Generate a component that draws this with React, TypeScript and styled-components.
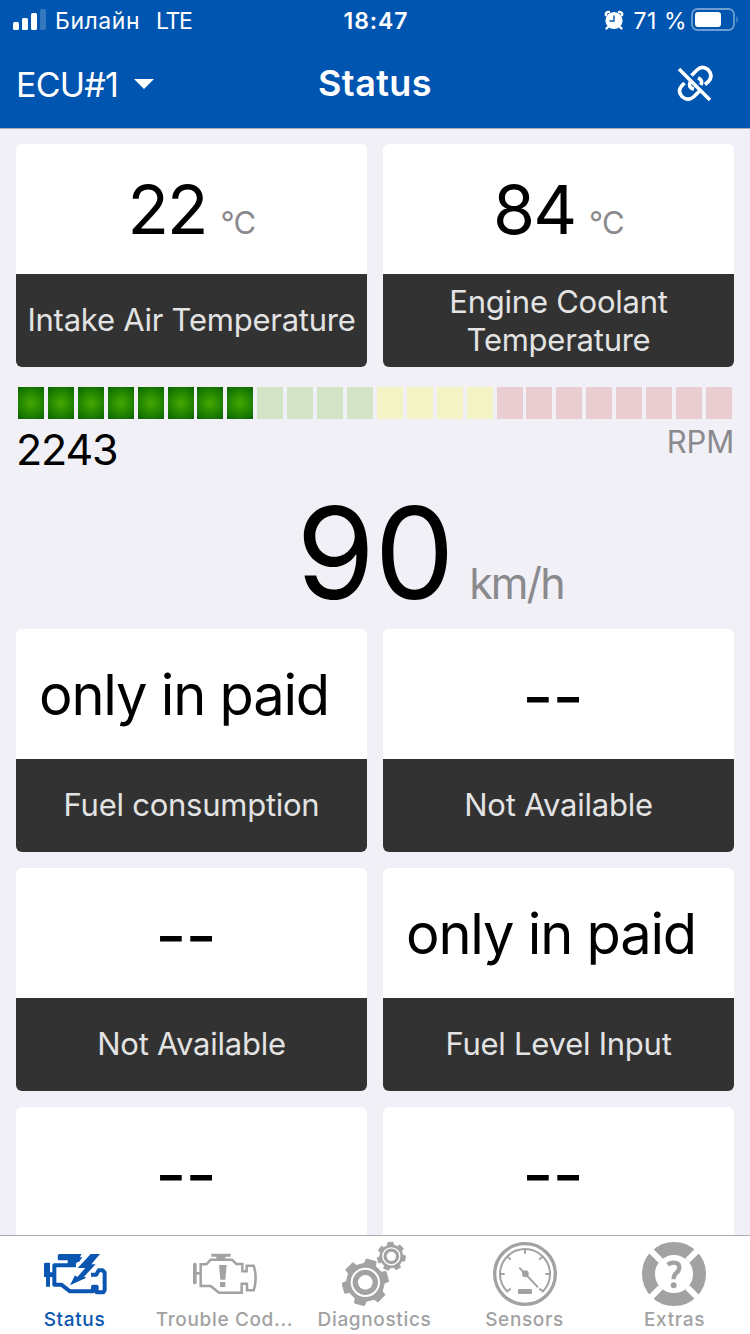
import React from 'react';
import styled, { createGlobalStyle } from 'styled-components';

const GlobalStyle = createGlobalStyle`
  * { box-sizing: border-box; }
  body { margin: 0; background: #f1f0f6; font-family: Inter, "Liberation Sans", sans-serif; }
  svg { display: block; flex: none; }
`;

const Screen = styled.div`
  width: 750px;
  height: 1334px;
  display: flex;
  flex-direction: column;
  overflow: hidden;
  background: #f1f0f6;
`;

const Header = styled.header`
  height: 129px;
  flex: none;
  background: #0055b0;
  border-bottom: 1px solid #a9adb6;
  color: #fff;
`;

const StatusBar = styled.div`
  height: 40px;
  display: grid;
  grid-template-columns: 1fr auto 1fr;
  align-items: center;
  padding: 1px 11px 0 13px;
  font-size: 23px;
  line-height: 40px;
`;

const Carrier = styled.div`
  display: flex;
  align-items: center;
  letter-spacing: 0.55px;
  white-space: pre;
`;

const Network = styled.span`
  margin-left: 16px;
  letter-spacing: -1.4px;
`;

const SignalIcon = styled.svg`
  margin: 0 9px 2px 0;
`;

const Clock = styled.div`
  font-weight: 600;
  letter-spacing: 0.9px;
`;

const Power = styled.div`
  display: flex;
  align-items: center;
  justify-content: flex-end;

  > svg { margin-bottom: 2px; }
`;

const Percent = styled.span`
  margin: 0 4px 0 10px;
  white-space: nowrap;
  letter-spacing: 0.5px;
`;

const NavBar = styled.div`
  height: 88px;
  display: grid;
  grid-template-columns: 1fr auto 1fr;
  align-items: center;
  padding: 0 16px;
`;

const EcuPicker = styled.div`
  display: flex;
  align-items: center;
  gap: 16px;
  font-size: 34px;
  letter-spacing: -0.8px;
`;

const Title = styled.h1`
  margin: 0;
  padding-bottom: 2px;
  font-size: 36px;
  font-weight: 600;
  line-height: 84px;
  letter-spacing: 0.4px;
`;

const LinkIcon = styled.svg`
  justify-self: end;
  margin-right: 20px;
`;

const Content = styled.main`
  flex: 1;
  min-height: 0;
  overflow: hidden;
  padding: 15px 16px 0;
`;

const CardGrid = styled.section`
  display: grid;
  grid-template-columns: 351px 351px;
  gap: 16px;
`;

const Card = styled.article`
  height: 223px;
  border-radius: 6px;
  overflow: hidden;
  display: flex;
  flex-direction: column;
  background: #fff;
`;

type ReadingKind = 'number' | 'text' | 'empty';

const readingStyles: Record<ReadingKind, string> = {
  number: 'font-size: 68px; line-height: 130px; letter-spacing: -2px;',
  text: 'font-size: 56px; line-height: 132px; letter-spacing: -1.2px; padding-right: 15px;',
  empty: 'font-size: 68px; line-height: 135px; letter-spacing: -1px; padding-right: 12px;',
};

const Reading = styled.div<{ $kind: ReadingKind }>`
  height: 130px;
  display: flex;
  align-items: baseline;
  justify-content: center;
  white-space: nowrap;
  color: #000;
  ${(p) => readingStyles[p.$kind]}
`;

const Unit = styled.span`
  margin-left: 14px;
  font-size: 31px;
  line-height: 40px;
  letter-spacing: -0.8px;
  color: #8a8a8e;
`;

const Caption = styled.div<{ $tall?: boolean }>`
  flex: 1;
  display: flex;
  align-items: center;
  justify-content: center;
  padding-bottom: ${(p) => (p.$tall ? 0 : '1px')};
  text-align: center;
  background: #323232;
  color: #e3e3e3;
  font-size: 31px;
  line-height: 38px;
  letter-spacing: -0.25px;
`;

const Tachometer = styled.section`
  height: 112px;
  padding-top: 20px;
`;

const Segments = styled.div`
  display: flex;
  gap: 3.91px;
  width: 714px;
  height: 32px;
  margin-left: 2px;
`;

const tones = {
  lit: 'radial-gradient(circle at 50% 50%, #45a800 0%, #218500 55%, #0a6200 100%)',
  green: '#d2e3c6',
  yellow: '#f4f3c5',
  red: '#e9cdd1',
};

const Segment = styled.i<{ $tone: keyof typeof tones }>`
  flex: 1;
  background: ${(p) => tones[p.$tone]};
`;

const TachLabels = styled.div`
  display: flex;
  justify-content: space-between;
  align-items: flex-start;
`;

const Rpm = styled.span`
  font-size: 43px;
  line-height: 60px;
  letter-spacing: -1.2px;
`;

const RpmUnit = styled.span`
  font-size: 31px;
  line-height: 46px;
  color: #8a8a8e;
  letter-spacing: -0.2px;
`;

const Speed = styled.section`
  height: 150px;
  display: flex;
  justify-content: center;
  align-items: baseline;
  line-height: 149px;
  font-size: 127px;
  letter-spacing: -0.5px;
  padding-left: 110px;
`;

const SpeedUnit = styled.span`
  margin-left: 15px;
  font-size: 43px;
  letter-spacing: -1.9px;
  color: #8a8a8e;
`;

const TabBar = styled.nav`
  height: 99px;
  flex: none;
  display: grid;
  grid-template-columns: repeat(5, 1fr);
  background: #fff;
  border-top: 1px solid #acacac;
`;

const Tab = styled.div<{ $active?: boolean }>`
  display: flex;
  flex-direction: column;
  align-items: center;
  padding-top: 5px;
  color: ${(p) => (p.$active ? '#0a56b0' : '#a2a2a2')};
`;

const TabLabel = styled.span`
  padding: 1px 1px 0 0;
  font-size: 19px;
  font-weight: 500;
  line-height: 24px;
  letter-spacing: 0.65px;
  white-space: nowrap;
`;

const gearPath = (cx: number, cy: number, outer: number, inner: number, teeth: number, turn: number) => {
  const step = 360 / teeth;
  const pts: string[] = [];
  for (let i = 0; i < teeth; i++) {
    const a = turn + i * step;
    [[-0.29, inner], [-0.21, outer], [0.21, outer], [0.29, inner]].forEach(([f, r]) => {
      const t = ((a + f * step) * Math.PI) / 180;
      pts.push(`${(cx + r * Math.cos(t)).toFixed(1)} ${(cy + r * Math.sin(t)).toFixed(1)}`);
    });
  }
  return `M${pts.join('L')}Z`;
};

const StatusIcon = () => (
  <svg width="66" height="66" viewBox="66 33 198 198" fill="currentColor">
    <path d="M117 72H184L180 82H187L177 96H172L165 104H143V91H117Q113 91 113 82T117 72Z" />
    <path d="M72 100L78 98H90V127H100V141H90V170H78V141H72Z" />
    <path d="M168 106H103V164H124L150 184H219V170H230V187H250L254 180V127L248 121H236L229 134H213" fill="none" stroke="currentColor" strokeWidth="12" strokeLinejoin="round" />
    <path d="M212 72H240L214 103H227L192 140L199 143L150 166L165 136L172 141L196 114H173Z" />
  </svg>
);

const TroubleIcon = () => (
  <svg width="66" height="66" viewBox="126 33 198 198" fill="currentColor">
    <path d="M184 71H242V80H226V90H199V80H184Z" />
    <rect x="129" y="98" width="11" height="65" rx="5" />
    <path d="M138 130H152M152 168V103H169L182 89H246L259 102H277V124H290V107H311Q323 145 311 181H291V161H275V188H207L182 168Z" fill="none" stroke="currentColor" strokeWidth="7.500" />
    <path d="M207 105H230L226 149H211ZM210 156H226V171H210Z" />
  </svg>
);

const DiagnosticsIcon = () => (
  <svg width="66" height="66" viewBox="96 33 198 198">
    <path d={gearPath(166, 157, 70, 57, 6, -75)} fill="currentColor" stroke="currentColor" strokeWidth="3" strokeLinejoin="round" />
    <circle cx="166" cy="157" r="41" fill="none" stroke="#fff" strokeWidth="6" />
    <circle cx="166" cy="157" r="22" fill="#fff" />
    <path d={gearPath(244, 79, 43, 35, 7, -94)} fill="currentColor" stroke="currentColor" strokeWidth="2" strokeLinejoin="round" />
    <circle cx="244" cy="79" r="25.5" fill="none" stroke="#fff" strokeWidth="4" />
    <circle cx="244" cy="79" r="14" fill="#fff" />
  </svg>
);

const SensorsIcon = () => (
  <svg width="66" height="66" viewBox="66 33 198 198" fill="none" stroke="currentColor">
    <circle cx="165" cy="132" r="91" strokeWidth="10" />
    <path d="M111 184A75 75 0 1 1 219 184" strokeWidth="6" />
    <path d="M165 57V71M90 132H104M226 132H240M112 79L122 89M218 79L208 89M109 186L122 176M221 186L208 176" strokeWidth="6" />
    <path d="M150 115L202 170" strokeWidth="6" strokeLinecap="round" />
    <circle cx="166" cy="131" r="10" fill="currentColor" stroke="none" />
    <rect x="144" y="177" width="42" height="15" rx="3" fill="currentColor" stroke="none" />
  </svg>
);

const ExtrasIcon = () => (
  <svg width="66" height="66" viewBox="66 33 198 198" fill="none">
    <circle cx="162" cy="132" r="76.5" stroke="currentColor" strokeWidth="39" />
    <path d="M92 62L122 92M232 62L202 92M92 202L122 172M232 202L202 172" stroke="#fff" strokeWidth="18" />
    <path d="M143 104Q151 98 161 98Q178 98 178 112Q178 122 169 129Q161 136 161 148" stroke="currentColor" strokeWidth="13" />
    <circle cx="161" cy="166" r="9" fill="currentColor" />
  </svg>
);

const readings: { value: string; kind: ReadingKind; label?: string }[] = [
  { value: 'only in paid', kind: 'text', label: 'Fuel consumption' },
  { value: '--', kind: 'empty', label: 'Not Available' },
  { value: '--', kind: 'empty', label: 'Not Available' },
  { value: 'only in paid', kind: 'text', label: 'Fuel Level Input' },
  { value: '--', kind: 'empty' },
  { value: '--', kind: 'empty' },
];

const tabs = [
  { label: 'Status', Icon: StatusIcon },
  { label: 'Trouble Cod...', Icon: TroubleIcon },
  { label: 'Diagnostics', Icon: DiagnosticsIcon },
  { label: 'Sensors', Icon: SensorsIcon },
  { label: 'Extras', Icon: ExtrasIcon },
];

const toneAt = (i: number): keyof typeof tones =>
  i < 8 ? 'lit' : i < 12 ? 'green' : i < 16 ? 'yellow' : 'red';

export default function App() {
  return (
    <>
      <GlobalStyle />
      <Screen>
        <Header>
          <StatusBar>
            <Carrier>
              <SignalIcon width="33" height="22" viewBox="0 0 33 22" fill="#fff">
                <rect x="0" y="13" width="6" height="8" rx="1.5" />
                <rect x="9" y="9" width="6" height="12" rx="1.5" />
                <rect x="18" y="4" width="6" height="17" rx="1.5" />
                <rect x="27" y="0" width="6" height="21" rx="1.5" opacity=".2" />
              </SignalIcon>
              Билайн<Network>LTE</Network>
            </Carrier>
            <Clock>18:47</Clock>
            <Power>
              <svg width="20" height="20" viewBox="0 0 20 20">
                <path d="M2 5Q1 2 5 2M15 2Q19 2 18 5M4 17L2.500 18.500M16 17L17.500 18.500" stroke="#fff" strokeWidth="2.4" fill="none" strokeLinecap="round" />
                <circle cx="10" cy="10.5" r="8.6" fill="#fff" />
                <path d="M10 5.5V11H5.5" stroke="#0055b0" strokeWidth="1.4" fill="none" />
              </svg>
              <Percent>71 %</Percent>
              <svg width="48" height="24" viewBox="0 0 48 24">
                <rect x="1" y="1" width="42" height="21" rx="5.5" fill="none" stroke="#6c9ed1" strokeWidth="1.8" />
                <rect x="4" y="4" width="26" height="15" rx="3" fill="#fff" />
                <path d="M45.500 8Q48 11.500 45.500 15Z" fill="#6c9ed1" />
              </svg>
            </Power>
          </StatusBar>
          <NavBar>
            <EcuPicker>
              ECU#1
              <svg width="20" height="10" viewBox="0 0 20 10"><path d="M0 0H20L10 10Z" fill="#fff" /></svg>
            </EcuPicker>
            <Title>Status</Title>
            <LinkIcon width="37" height="38" viewBox="0 0 37 38" fill="none" stroke="#fff" strokeWidth="3.6">
              <path d="M14.500 10.500L20 5Q25 0 31 4.500Q37 11 31 17L28 19.500" />
              <path d="M7.500 18L5 20.500Q0 26 5 31.500Q11 37 17 31.500L23 25.500" />
              <path d="M13 17Q11 23 17 24M21 13Q26 15 24 20" />
              <path d="M2 4L33 35" />
            </LinkIcon>
          </NavBar>
        </Header>
        <Content>
          <CardGrid>
            <Card>
              <Reading $kind="number">22<Unit>°C</Unit></Reading>
              <Caption>Intake Air Temperature</Caption>
            </Card>
            <Card>
              <Reading $kind="number">84<Unit>°C</Unit></Reading>
              <Caption $tall>Engine Coolant<br />Temperature</Caption>
            </Card>
          </CardGrid>
          <Tachometer>
            <Segments>
              {Array.from({ length: 24 }, (_, i) => <Segment key={i} $tone={toneAt(i)} />)}
            </Segments>
            <TachLabels>
              <Rpm>2243</Rpm>
              <RpmUnit>RPM</RpmUnit>
            </TachLabels>
          </Tachometer>
          <Speed>90<SpeedUnit>km/h</SpeedUnit></Speed>
          <CardGrid>
            {readings.map((r, i) => (
              <Card key={i}>
                <Reading $kind={r.kind}>{r.value}</Reading>
                {r.label && <Caption>{r.label}</Caption>}
              </Card>
            ))}
          </CardGrid>
        </Content>
        <TabBar>
          {tabs.map(({ label, Icon }, i) => (
            <Tab key={label} $active={i === 0}>
              <Icon />
              <TabLabel>{label}</TabLabel>
            </Tab>
          ))}
        </TabBar>
      </Screen>
    </>
  );
}
